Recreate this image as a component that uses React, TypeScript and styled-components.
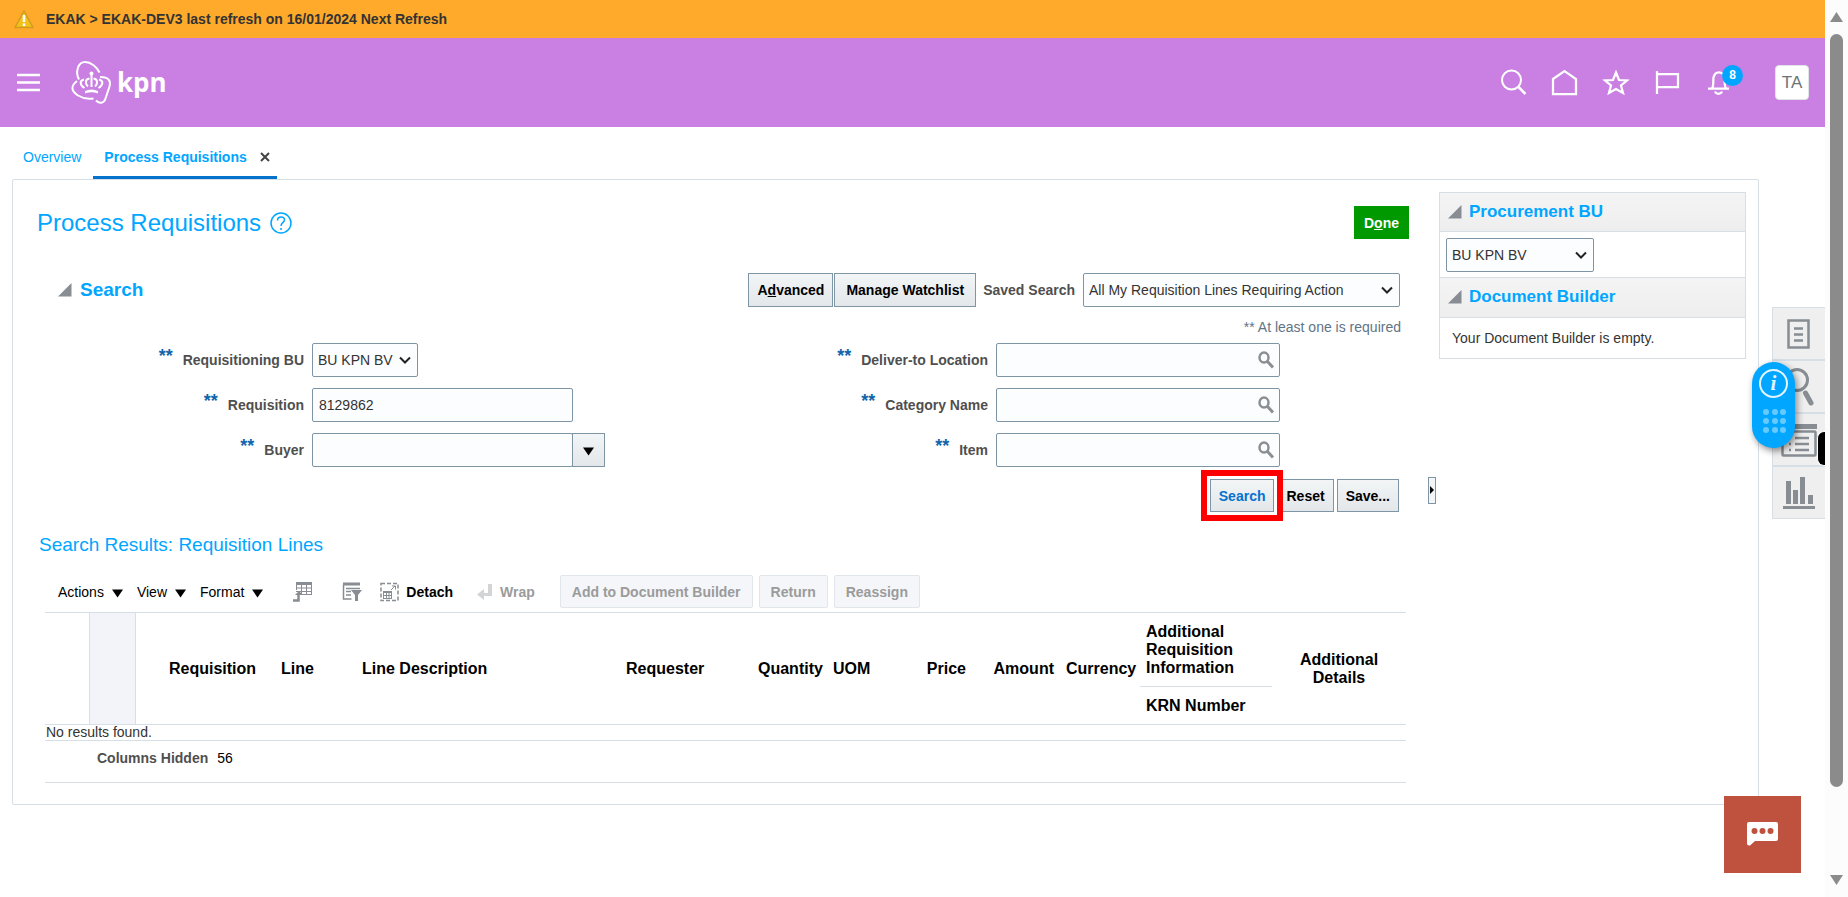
import React from "react";
import styled, { createGlobalStyle, css } from "styled-components";

const blue = "#00a6ff";
const line = "#d6dfe6";
const edge = "#7e95a6";

const GlobalStyle = createGlobalStyle`
  *, *::before, *::after { box-sizing: border-box; }
  body { margin: 0; background: #fff; color: #333; font: 14px/16px "Liberation Sans", Arial, sans-serif; }
  button, input, select { font: inherit; color: inherit; margin: 0; }
  button { cursor: pointer; }
  h1, h2, h3 { margin: 0; font-weight: 400; color: ${blue}; }
  svg { display: block; flex: none; }
`;

const Shell = styled.div`
  display: flex;
  min-height: 100vh;
`;
const Page = styled.div`
  flex: 1;
  min-width: 0;
`;

const ScrollTrack = styled.div`
  position: sticky;
  top: 0;
  width: 23px;
  height: 100vh;
  padding: 12px 5px;
  display: flex;
  flex-direction: column;
  justify-content: space-between;
  align-items: center;
  background: #fcfcfc;
`;
const ScrollBody = styled.div`
  flex: 1;
  width: 100%;
  padding: 12px 0 88px;
  display: flex;
`;
const Thumb = styled.div`
  flex: 1;
  border-radius: 7px;
  background: #8b8b8b;
`;

const Banner = styled.div`
  display: flex;
  align-items: center;
  gap: 12px;
  height: 38px;
  padding: 0 14px;
  background: #ffaa2b;
  font-weight: 700;
`;

const Header = styled.header`
  display: flex;
  align-items: center;
  height: 89px;
  padding: 0 16px;
  background: #c980e2;
`;
const IconButton = styled.button`
  position: relative;
  display: flex;
  padding: 0;
  border: 0;
  background: none;
  color: #fff;
`;
const Brand = styled.a`
  margin-left: 30px;
  display: flex;
`;
const HeaderActions = styled.nav`
  display: flex;
  align-items: center;
  gap: 24px;
  margin-left: auto;
`;
const Badge = styled.span`
  position: absolute;
  left: 17px;
  top: -4px;
  width: 21px;
  height: 21px;
  border-radius: 50%;
  background: ${blue};
  font-size: 12px;
  font-weight: 700;
  line-height: 21px;
  text-align: center;
`;
const Avatar = styled.button`
  width: 34px;
  height: 35px;
  margin-left: 19px;
  padding: 0;
  border: 1px solid #dfe4e7;
  border-radius: 4px;
  background: #fff;
  color: #6d7378;
  font-size: 17px;
`;

const Tabs = styled.nav`
  display: flex;
  height: 52px;
  padding-left: 12px;
`;
const Tab = styled.div<{ $active?: boolean }>`
  display: flex;
  align-items: center;
  gap: 13px;
  padding: 7px 12px 0 11px;
  a { color: ${blue}; text-decoration: none; }
  ${(p) => p.$active && css`
    padding: 10px 7px 0 11px;
    font-weight: 700;
    border-bottom: 3px solid #0572ce;
  `}
`;

const Columns = styled.div`
  display: flex;
  align-items: flex-start;
  padding-left: 12px;
`;
const Panel = styled.main`
  flex: 1;
  min-width: 0;
  display: flex;
  align-items: flex-start;
  padding-right: 12px;
  border: 1px solid ${line};
  border-radius: 2px;
`;
const Work = styled.div`
  flex: 1;
  min-width: 0;
  padding: 26px 23px 21px 24px;
`;
const TitleRow = styled.div`
  display: flex;
  align-items: center;
  gap: 9px;
  margin-right: -4px;
`;
const PageTitle = styled.h1`
  font-size: 24px;
  line-height: 28px;
`;
const DoneButton = styled.button`
  height: 33px;
  margin-left: auto;
  padding: 0 10px;
  border: 0;
  background: #090;
  color: #fff;
  font-weight: 700;
`;

const SearchBar = styled.div`
  display: flex;
  align-items: center;
  margin-top: 34px;
  padding: 0 5px 0 21px;
`;
const SectionTitle = styled.h2<{ $small?: boolean }>`
  display: flex;
  align-items: center;
  gap: ${(p) => (p.$small ? 7 : 8)}px;
  font-size: ${(p) => (p.$small ? 17 : 19)}px;
  line-height: 22px;
  font-weight: 700;
`;
const BarActions = styled.div`
  display: flex;
  align-items: center;
  gap: 1px;
  margin-left: auto;
`;
const Button = styled.button<{ $accent?: boolean; $tall?: boolean; $pad?: number }>`
  position: relative;
  height: ${(p) => (p.$tall ? 34 : 33)}px;
  padding: 0 ${(p) => p.$pad ?? 8}px;
  border: 1px solid ${edge};
  background: linear-gradient(#f3f5f6, #e3e7ea);
  color: ${(p) => (p.$accent ? "#0572ce" : "#000")};
  font-weight: 700;
  white-space: nowrap;
`;
const Highlight = styled.span`
  position: absolute;
  inset: -10px;
  border: 6px solid #f00;
  pointer-events: none;
  z-index: 1;
`;
const BarLabel = styled.label`
  margin: 0 7px 0 6px;
  color: #4f4f4f;
  font-weight: 700;
`;
const SelectBox = styled.span<{ $width: number }>`
  position: relative;
  display: inline-flex;
  align-items: center;
  width: ${(p) => p.$width}px;
  svg { position: absolute; right: 6px; pointer-events: none; }
`;
const Select = styled.select`
  appearance: none;
  width: 100%;
  height: 34px;
  padding: 0 5px;
  border: 1px solid ${edge};
  border-radius: 2px;
  background: #fcfdfe;
`;
const Hint = styled.p`
  margin: 12px 4px 8px;
  color: #5f7485;
  text-align: right;
`;

const Form = styled.form`
  display: grid;
  grid-template-columns: 1fr 1fr;
  gap: 11px 0;
`;
const Field = styled.div`
  display: grid;
  grid-template-columns: 267px auto;
  justify-content: start;
  align-items: center;
  gap: 8px;
  height: 34px;
`;
const FieldLabel = styled.label`
  display: flex;
  justify-content: flex-end;
  gap: 10px;
  color: #4f4f4f;
  font-weight: 700;
`;
const Star = styled.span`
  margin-top: -4px;
  color: #1065ab;
  font-size: 18px;
`;
const Combo = styled.div`
  position: relative;
  display: flex;
  align-items: center;
`;
const Input = styled.input<{ $width: number }>`
  width: ${(p) => p.$width}px;
  height: 34px;
  padding: 0 6px;
  border: 1px solid ${edge};
  border-radius: 2px;
  background: #fcfdfe;
`;
const DropButton = styled.button`
  display: flex;
  align-items: center;
  justify-content: center;
  width: 33px;
  height: 34px;
  margin-left: -1px;
  padding: 2px 0 0;
  border: 1px solid ${edge};
  background: linear-gradient(#f3f5f6, #e3e7ea);
`;
const LookupButton = styled.button`
  position: absolute;
  right: 5px;
  padding: 0;
  border: 0;
  background: none;
`;
const FormButtons = styled.div`
  display: flex;
  justify-content: flex-end;
  gap: 3px;
  margin-top: 12px;
  padding-right: 6px;
`;

const ResultsTitle = styled.h2`
  margin: 22px 0 0 2px;
  font-size: 19px;
  line-height: 22px;
`;
const Toolbar = styled.div`
  display: flex;
  align-items: center;
  margin: 19px 0 4px 21px;
`;
const Menu = styled.button`
  display: flex;
  align-items: center;
  gap: 8px;
  margin-right: 14px;
  padding: 0;
  border: 0;
  background: none;
  color: #000;
  svg { margin-top: 3px; }
`;
const Tool = styled.button<{ $gap: number }>`
  display: flex;
  align-items: center;
  gap: 7px;
  margin-left: ${(p) => p.$gap}px;
  padding: 0;
  border: 0;
  background: none;
  color: #000;
  font-weight: 700;
  &:disabled { color: #9b9b9b; }
`;
const BulkActions = styled.div`
  display: flex;
  gap: 6px;
  margin-left: 25px;
`;
const BulkButton = styled.button`
  height: 33px;
  padding: 0 11px;
  border: 1px solid #e1e6ea;
  border-radius: 2px;
  background: #f4f6f9;
  font-weight: 700;
  &:disabled { color: #9b9b9b; }
`;

const Table = styled.table`
  width: calc(100% - 7px);
  margin-left: 8px;
  border-collapse: collapse;
  table-layout: fixed;
  border-bottom: 1px solid ${line};
`;
const Th = styled.th<{ $align?: string; $shade?: boolean; $sub?: boolean }>`
  height: ${(p) => (p.$sub ? 38 : 74)}px;
  padding: 0 6px;
  border-top: 1px solid ${line};
  border-bottom: 1px solid ${line};
  color: #000;
  font-size: 16px;
  line-height: 18px;
  text-align: ${(p) => p.$align ?? "left"};
  ${(p) => p.$shade && css`
    background: #f2f4f9;
    border-left: 1px solid ${line};
    border-right: 1px solid ${line};
  `}
`;
const EmptyCell = styled.td`
  padding: 0 1px;
  border-bottom: 1px solid ${line};
  line-height: 15px;
`;
const FootCell = styled.td`
  height: 42px;
  padding: 9px 52px 0;
  vertical-align: top;
  color: #000;
  b { margin-right: 9px; color: #4f4f4f; }
`;

const Splitter = styled.button`
  align-self: center;
  display: flex;
  align-items: center;
  justify-content: center;
  width: 8px;
  height: 27px;
  margin-bottom: 4px;
  padding: 0;
  border: 1px solid ${edge};
  background: #f3f5f7;
`;

const Aside = styled.aside`
  width: 307px;
  margin: 12px 0 0 3px;
  border: 1px solid ${line};
`;
const AsideHead = styled.div`
  display: flex;
  align-items: center;
  height: 39px;
  padding: 0 8px 1px;
  border-bottom: 1px solid ${line};
  background: linear-gradient(#f4f4f4, #eee);
`;
const AsideBody = styled.div`
  padding: 6px 6px 5px;
  & + ${AsideHead} { border-top: 1px solid ${line}; height: 41px; padding-bottom: 2px; }
`;
const AsideText = styled.p`
  margin: 6px;
  line-height: 17px;
`;

const Rail = styled.nav`
  position: relative;
  width: 53px;
  margin: 128px 0 0 13px;
  border: 1px solid ${line};
  border-width: 1px 0 1px 1px;
  background: #efefef;
`;
const RailButton = styled.button`
  display: flex;
  align-items: center;
  justify-content: center;
  width: 51px;
  height: 51px;
  padding: 0;
  border: 0;
  background: none;
  & + & { height: 53px; width: 100%; padding-right: 1px; border-top: 2px solid ${line}; }
`;
const Guide = styled.button`
  position: absolute;
  left: -21px;
  top: 54px;
  display: flex;
  padding: 0;
  border: 0;
  border-radius: 22px;
  background: ${blue};
  box-shadow: 2px 3px 7px rgba(0, 0, 0, 0.45);
`;
const Notch = styled.span`
  position: absolute;
  right: 0;
  top: 123px;
  width: 8px;
  height: 35px;
  border: 1px solid #fff;
  border-right: 0;
  border-radius: 7px 0 0 7px;
  background: #000;
`;
const Chat = styled.button`
  position: fixed;
  right: 47px;
  bottom: 24px;
  display: flex;
  align-items: center;
  justify-content: center;
  width: 77px;
  height: 77px;
  padding: 0;
  border: 0;
  background: #bf523f;
`;

const Disclosure = () => (
  <svg width="14" height="14" viewBox="0 0 14 14"><path d="M13.5 0v13.5H0z" fill="#878d92" /></svg>
);
const Chevron = () => (
  <svg width="14" height="14" viewBox="0 0 14 14"><path d="M2 4.5l5 5 5-5" fill="none" stroke="#222" strokeWidth="2" /></svg>
);
const Caret = () => (
  <svg width="11" height="9" viewBox="0 0 11 9"><path d="M0 .5h11L5.500 8.500z" fill="#000" /></svg>
);
const Lens = () => (
  <svg width="18" height="18" viewBox="0 0 18 18" fill="none" stroke="#8a8f93">
    <ellipse cx="7" cy="6.500" rx="4.500" ry="5" strokeWidth="2.500" /><path d="M10.500 10.500l5.500 6" strokeWidth="3" />
  </svg>
);

const Logo = () => (
  <svg width="98" height="46" viewBox="0 0 98 46" fill="none" stroke="#fff" strokeWidth="2" aria-label="kpn">
    <path d="M8 19.500C4 12 7 2 14 2c6 0 12 5 14.500 10.500" />
    <path d="M6 21C-.5 26 0 31 7 35.500c5 3 10 4 15.500 3" />
    <path d="M29 17c9 0 11 4 9.500 9.500l-4 12c-1.500 5-6 5.500-9.500 2" />
    <g fill="#fff" stroke="none">
      <circle cx="20.500" cy="13.500" r="2" /><rect x="19.500" y="15" width="2" height="12" />
      <path d="M14 31q6.500-3 13 0v2.500q-6.500-2.500-13 0z" />
    </g>
    <path d="M18.500 18.500c-5 .5-4 6-1.500 8M22.500 18.500c5 .5 4 6 1.500 8M13 19.500c-5 1-4 6 .5 8.500M28 19.500c5 1 4 6-.5 8.500" />
    <text x="46" y="32" fill="#fff" stroke="none" fontFamily="Open Sans" fontWeight="700" fontSize="26">kpn</text>
  </svg>
);

const columns: { name: string; width?: number; align?: string; id: string }[] = [
  { id: "req", name: "Requisition", width: 112 },
  { id: "line", name: "Line", width: 81 },
  { id: "desc", name: "Line Description" },
  { id: "who", name: "Requester", width: 132 },
  { id: "qty", name: "Quantity", width: 75, align: "right" },
  { id: "uom", name: "UOM", width: 64 },
  { id: "price", name: "Price", width: 81, align: "right" },
  { id: "amount", name: "Amount", width: 88, align: "right" },
  { id: "cur", name: "Currency", width: 80 },
];

const LookupField = ({ id, label }: { id: string; label: string }) => (
  <Field>
    <FieldLabel htmlFor={id}><Star>**</Star>{label}</FieldLabel>
    <Combo>
      <Input id={id} $width={284} />
      <LookupButton type="button" aria-label={`Find ${label}`}><Lens /></LookupButton>
    </Combo>
  </Field>
);

export default function App() {
  return (
    <Shell>
      <GlobalStyle />
      <Page>
        <Banner>
          <svg width="20" height="19" viewBox="0 0 20 19">
            <path d="M10 1L19 17.500H1z" fill="#f2c21a" stroke="#cf9a1f" strokeWidth="1.500" strokeLinejoin="round" />
            <path d="M10 5v7M10 13.500v2.500" stroke="#fff" strokeWidth="2.500" />
          </svg>
          EKAK &gt; EKAK-DEV3 last refresh on 16/01/2024 Next Refresh
        </Banner>
        <Header>
          <IconButton aria-label="Navigator">
            <svg width="25" height="19" viewBox="0 0 25 19"><path d="M1 2h23M1 9.500h23M1 17h23" stroke="#fff" strokeWidth="2.500" /></svg>
          </IconButton>
          <Brand href="#"><Logo /></Brand>
          <HeaderActions>
            <IconButton aria-label="Search">
              <svg width="27" height="27" viewBox="0 0 27 27" fill="none" stroke="#fff" strokeWidth="2"><circle cx="11.500" cy="11" r="9.500" /><path d="M18 17.500l7.500 7.500" strokeWidth="2.500" /></svg>
            </IconButton>
            <IconButton aria-label="Home">
              <svg width="27" height="27" viewBox="0 0 27 27" fill="none" stroke="#fff" strokeWidth="2.250"><path d="M2 10L13.500 2 25 10v15H2z" /></svg>
            </IconButton>
            <IconButton aria-label="Favorites">
              <svg width="28" height="27" viewBox="0 0 28 27" fill="none" stroke="#fff" strokeWidth="2.250"><path d="M14 3.500l3 7.500 8 .5-6 5 2 7.500-7-4-7 4 2-7.500-6-5 8-.5z" /></svg>
            </IconButton>
            <IconButton aria-label="Watchlist">
              <svg width="27" height="27" viewBox="0 0 27 27" fill="none" stroke="#fff" strokeWidth="2.250"><path d="M3 2v23M3 5h21v13H3" /></svg>
            </IconButton>
            <IconButton aria-label="Notifications">
              <svg width="27" height="27" viewBox="-3 0 27 27" fill="none" stroke="#fff" strokeWidth="2.250"><path d="M4 19.500c2-3 1-8 1.500-11 1.500-7 9.500-7 11 0 .5 3-.5 8 1.500 11M0 19.500h21M7 22.500c1 3 6 3 7 0" /></svg>
              <Badge>8</Badge>
            </IconButton>
            <Avatar>TA</Avatar>
          </HeaderActions>
        </Header>
        <Tabs>
          <Tab><a href="#overview">Overview</a></Tab>
          <Tab $active>
            <a href="#process">Process Requisitions</a>
            <IconButton aria-label="Close tab">
              <svg width="10" height="10" viewBox="0 0 10 10"><path d="M1 1l8 8M9 1L1 9" stroke="#444" strokeWidth="2" /></svg>
            </IconButton>
          </Tab>
        </Tabs>
        <Columns>
          <Panel>
            <Work>
              <TitleRow>
                <PageTitle>Process Requisitions</PageTitle>
                <IconButton aria-label="Help">
                  <svg width="22" height="22" viewBox="0 0 22 22" fill="none" stroke={blue} strokeWidth="1.500"><circle cx="11" cy="11" r="10" /><path d="M7.500 8.500c0-5 7-4.500 7-.5 0 2.500-3.500 2.500-3.500 6M11 16v2" /></svg>
                </IconButton>
                <DoneButton>D<u>o</u>ne</DoneButton>
              </TitleRow>
              <SearchBar>
                <SectionTitle><Disclosure />Search</SectionTitle>
                <BarActions>
                  <Button $tall>A<u>d</u>vanced</Button>
                  <Button $tall $pad={11}>Manage Watchlist</Button>
                  <BarLabel htmlFor="saved">Saved Search</BarLabel>
                  <SelectBox $width={317}>
                    <Select id="saved"><option>All My Requisition Lines Requiring Action</option></Select>
                    <Chevron />
                  </SelectBox>
                </BarActions>
              </SearchBar>
              <Hint>** At least one is required</Hint>
              <Form onSubmit={(e: React.FormEvent) => e.preventDefault()}>
                <Field>
                  <FieldLabel htmlFor="bu"><Star>**</Star>Requisitioning BU</FieldLabel>
                  <SelectBox $width={106}>
                    <Select id="bu"><option>BU KPN BV</option></Select>
                    <Chevron />
                  </SelectBox>
                </Field>
                <LookupField id="deliver" label="Deliver-to Location" />
                <Field>
                  <FieldLabel htmlFor="requisition"><Star>**</Star>Requisition</FieldLabel>
                  <Input id="requisition" $width={261} defaultValue="8129862" />
                </Field>
                <LookupField id="category" label="Category Name" />
                <Field>
                  <FieldLabel htmlFor="buyer"><Star>**</Star>Buyer</FieldLabel>
                  <Combo>
                    <Input id="buyer" $width={261} />
                    <DropButton type="button" aria-label="Choose buyer"><Caret /></DropButton>
                  </Combo>
                </Field>
                <LookupField id="item" label="Item" />
              </Form>
              <FormButtons>
                <Button $accent>Search<Highlight /></Button>
                <Button>Reset</Button>
                <Button>Save...</Button>
              </FormButtons>
              <ResultsTitle>Search Results: Requisition Lines</ResultsTitle>
              <Toolbar>
                <Menu>Actions<Caret /></Menu>
                <Menu>View<Caret /></Menu>
                <Menu>Format<Caret /></Menu>
                <Tool $gap={16} aria-label="Freeze">
                  <svg width="20" height="20" viewBox="0 0 20 20" fill="none" stroke="#878d92"><path d="M3 1.500h16" strokeWidth="3" /><path d="M3.500 3v5M8.500 3v10M13.500 3v10M18.500 3v10M3 6h16M3 9.500h16M8 12.500h11" /><path d="M0 18.500h5.500V12" strokeWidth="2.500" /><path d="M2 13l4-4 4 4z" fill="#878d92" stroke="none" /></svg>
                </Tool>
                <Tool $gap={29} aria-label="Query By Example">
                  <svg width="20" height="20" viewBox="0 0 20 20" fill="none" stroke="#878d92"><path d="M1 2h17" strokeWidth="3" /><path d="M1.500 3v14h8M4 6.500h14M4 9.500h5M4 13h5" strokeWidth="1.500" /><path d="M9 8h11l-4 5v6h-3v-6z" fill="#878d92" stroke="none" /></svg>
                </Tool>
                <Tool $gap={18}>
                  <svg width="19" height="20" viewBox="0 0 19 20" fill="none" stroke="#878d92"><path d="M1 1.500h17v17H1z" strokeWidth="1.500" strokeDasharray="4 2" /><rect x="3.500" y="9.500" width="8" height="7" /><path d="M3 10.500h9M6.500 10v7M9 10v7M3 13.500h9M11 8l4-4M12 4h3.500v3.500" /></svg>
                  Detach
                </Tool>
                <Tool $gap={24} disabled>
                  <svg width="16" height="18" viewBox="0 0 16 18"><path d="M11 1h4v12H7v4L0 11.500 7 6v4h4z" fill="#d3d4d5" /></svg>
                  Wrap
                </Tool>
                <BulkActions>
                  <BulkButton disabled>Add to Document Builder</BulkButton>
                  <BulkButton disabled>Return</BulkButton>
                  <BulkButton disabled>Reassign</BulkButton>
                </BulkActions>
              </Toolbar>
              <Table>
                <colgroup>
                  <col width="44" /><col width="46" /><col width="28" />
                  {columns.map((c) => <col key={c.id} width={c.width} />)}
                  <col width="132" /><col width="134" />
                </colgroup>
                <thead>
                  <tr>
                    <Th rowSpan={2} /><Th rowSpan={2} $shade /><Th rowSpan={2} />
                    {columns.map((c) => <Th key={c.id} rowSpan={2} $align={c.align}>{c.name}</Th>)}
                    <Th>Additional<br />Requisition<br />Information</Th>
                    <Th rowSpan={2} $align="center">Additional<br />Details</Th>
                  </tr>
                  <tr><Th $sub>KRN Number</Th></tr>
                </thead>
                <tbody>
                  <tr><EmptyCell colSpan={14}>No results found.</EmptyCell></tr>
                </tbody>
                <tfoot>
                  <tr><FootCell colSpan={14}><b>Columns Hidden</b>56</FootCell></tr>
                </tfoot>
              </Table>
            </Work>
            <Splitter aria-label="Collapse pane"><svg width="4" height="8" viewBox="0 0 4 8"><path d="M0 0l4 4-4 4z" /></svg></Splitter>
            <Aside>
              <AsideHead><SectionTitle $small><Disclosure />Procurement BU</SectionTitle></AsideHead>
              <AsideBody>
                <SelectBox $width={148}>
                  <Select aria-label="Procurement BU"><option>BU KPN BV</option></Select>
                  <Chevron />
                </SelectBox>
              </AsideBody>
              <AsideHead><SectionTitle $small><Disclosure />Document Builder</SectionTitle></AsideHead>
              <AsideBody><AsideText>Your Document Builder is empty.</AsideText></AsideBody>
            </Aside>
          </Panel>
          <Rail>
            <RailButton aria-label="Details">
              <svg width="23" height="30" viewBox="0 0 23 30" fill="none" stroke="#878d92" strokeWidth="2.500"><rect x="1.500" y="1.500" width="20" height="27" /><path d="M7 9.500h9M7 15.500h9M7 21.500h9" /></svg>
            </RailButton>
            <RailButton aria-label="Find">
              <svg width="34" height="40" viewBox="0 0 34 40" fill="none" stroke="#878d92"><circle cx="15" cy="13" r="10.500" strokeWidth="3" /><path d="M23.500 26l5.500 10" strokeWidth="5" strokeLinecap="round" /></svg>
            </RailButton>
            <RailButton aria-label="Lists">
              <svg width="36" height="34" viewBox="0 0 36 34" fill="none" stroke="#878d92" strokeWidth="2.500"><path d="M1 3.500h35" strokeWidth="5" /><rect x="1.500" y="8.500" width="33" height="24" rx="1" /><path d="M8 15h2M8 21h2M8 27h2M14 15h14M14 21h14M14 27h14" /></svg>
            </RailButton>
            <RailButton aria-label="Analytics">
              <svg width="32" height="34" viewBox="0 0 32 34" fill="#878d92"><path d="M3 5h5v23H3zM10 14h5v14h-5zM17 1h5v27h-5zM25 19h5v9h-5zM0 30h32v3H0z" /></svg>
            </RailButton>
            <Guide aria-label="Guided help">
              <svg width="43" height="86" viewBox="0 0 43 86">
                <circle cx="21.500" cy="21.500" r="13.500" fill="none" stroke="#e4f5ff" strokeWidth="2" />
                <text x="21.500" y="28" fill="#e4f5ff" textAnchor="middle" fontFamily="Liberation Serif" fontStyle="italic" fontWeight="700" fontSize="21">i</text>
                <g fill="#66caff">
                  {[50, 59, 68].map((y) => [14, 23, 31].map((x) => <circle key={`${x}-${y}`} cx={x} cy={y} r="3" />))}
                </g>
              </svg>
            </Guide>
            <Notch />
          </Rail>
        </Columns>
        <Chat aria-label="Chat">
          <svg width="31" height="25" viewBox="0 0 31 25"><path d="M2 0h27q2 0 2 2v15q0 2-2 2H8l-5 4.500q-3 .5-3-2V2q0-2 2-2z" fill="#fff" /><g fill="#bf523f"><circle cx="7.500" cy="9" r="3" /><circle cx="15.500" cy="9" r="3" /><circle cx="23.500" cy="9" r="3" /></g></svg>
        </Chat>
      </Page>
      <ScrollTrack>
        <svg width="13" height="10" viewBox="0 0 13 10"><path d="M6.500 0L13 10H0z" fill="#8b8b8b" /></svg>
        <ScrollBody><Thumb /></ScrollBody>
        <svg width="13" height="10" viewBox="0 0 13 10"><path d="M0 0h13L6.500 10z" fill="#8b8b8b" /></svg>
      </ScrollTrack>
    </Shell>
  );
}
